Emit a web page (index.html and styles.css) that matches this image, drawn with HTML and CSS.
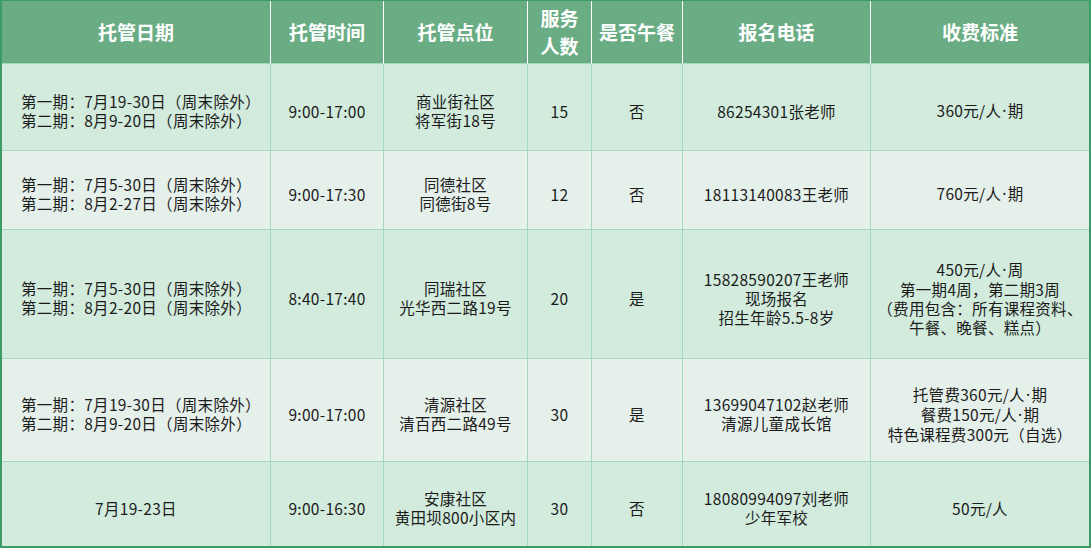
FILE: index.html
```html
<!DOCTYPE html>
<html lang="zh-CN">
<head>
<meta charset="utf-8">
<title>托管信息</title>
<link rel="stylesheet" href="styles.css">
</head>
<body>
<div class="sheet">
  <div class="cell head">托管日期</div>
  <div class="cell head">托管时间</div>
  <div class="cell head">托管点位</div>
  <div class="cell head">服务<br>人数</div>
  <div class="cell head">是否午餐</div>
  <div class="cell head">报名电话</div>
  <div class="cell head last-col">收费标准</div>

  <div class="cell odd date">第一期：7月19-30日（周末除外）<br>第二期：8月9-20日（周末除外）</div>
  <div class="cell odd">9:00-17:00</div>
  <div class="cell odd">商业街社区<br>将军街18号</div>
  <div class="cell odd">15</div>
  <div class="cell odd">否</div>
  <div class="cell odd">86254301张老师</div>
  <div class="cell odd last-col"><span class="in">360元/人<span class="dot">·</span>期</span></div>

  <div class="cell even date">第一期：7月5-30日（周末除外）<br>第二期：8月2-27日（周末除外）</div>
  <div class="cell even">9:00-17:30</div>
  <div class="cell even">同德社区<br>同德街8号</div>
  <div class="cell even">12</div>
  <div class="cell even">否</div>
  <div class="cell even">18113140083王老师</div>
  <div class="cell even last-col"><span class="in">760元/人<span class="dot">·</span>期</span></div>

  <div class="cell odd date">第一期：7月5-30日（周末除外）<br>第二期：8月2-20日（周末除外）</div>
  <div class="cell odd">8:40-17:40</div>
  <div class="cell odd">同瑞社区<br>光华西二路19号</div>
  <div class="cell odd">20</div>
  <div class="cell odd">是</div>
  <div class="cell odd">15828590207王老师<br>现场报名<br>招生年龄5.5-8岁</div>
  <div class="cell odd last-col"><span class="in">450元/人<span class="dot">·</span>周<br>第一期4周，第二期3周<br>（费用包含：所有课程资料、<br>午餐、晚餐、糕点）</span></div>

  <div class="cell even date">第一期：7月19-30日（周末除外）<br>第二期：8月9-20日（周末除外）</div>
  <div class="cell even">9:00-17:00</div>
  <div class="cell even">清源社区<br>清百西二路49号</div>
  <div class="cell even">30</div>
  <div class="cell even">是</div>
  <div class="cell even">13699047102赵老师<br>清源儿童成长馆</div>
  <div class="cell even last-col"><span class="in">托管费360元/人<span class="dot">·</span>期<br>餐费150元/人<span class="dot">·</span>期<br>特色课程费300元（自选）</span></div>

  <div class="cell odd last-row">7月19-23日</div>
  <div class="cell odd last-row">9:00-16:30</div>
  <div class="cell odd last-row">安康社区<br>黄田坝800小区内</div>
  <div class="cell odd last-row">30</div>
  <div class="cell odd last-row">否</div>
  <div class="cell odd last-row">18080994097刘老师<br>少年军校</div>
  <div class="cell odd last-row last-col">50元/人</div>
</div>
</body>
</html>
```

FILE: styles.css
```css
* { box-sizing: border-box; }
html, body { margin: 0; padding: 0; background: #ffffff; }
body {
  font-family: "Noto Sans CJK SC", "Noto Sans", sans-serif;
  font-size: 15.5px;
  letter-spacing: 0.3px;
  color: #1b1b1b;
}
.sheet {
  width: 1091px;
  height: 548px;
  display: grid;
  grid-template-columns: 269px 113px 144px 64px 91px 188px 218px;
  grid-template-rows: 63px 87px 79px 129px 103px 84px;
  border-style: solid;
  border-color: #3d9b66;
  border-width: 1px 2px 2px 2px;
}
.cell {
  display: flex;
  align-items: center;
  justify-content: center;
  text-align: center;
  line-height: 19px;
  border-right: 1px solid #a4d9bf;
  border-bottom: 1px solid #a4d9bf;
  padding-top: 8px;
  white-space: nowrap;
}
.in { display: block; }
.date {
  justify-content: flex-start;
  text-align: left;
  padding-left: 19px;
}
.dot {
  font-family: "Noto Sans", sans-serif;
  margin: 0 1px;
}
.head {
  background: #6aad85;
  color: #ffffff;
  font-weight: 700;
  font-size: 19px;
  line-height: 28px;
  letter-spacing: 0;
  border-right-color: #ffffff;
  padding-top: 0;
}
.odd { background: #d2ebdd; }
.even { background: #e6f0eb; }
.last-col { border-right: none; }
.last-row { border-bottom: none; }
```
